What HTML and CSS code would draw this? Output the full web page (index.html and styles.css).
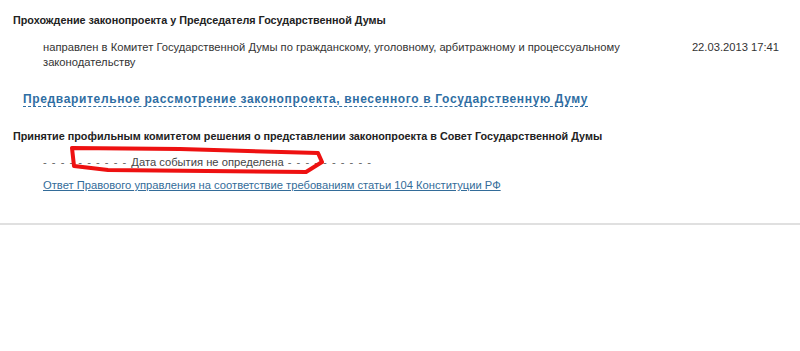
FILE: index.html
```html
<!DOCTYPE html>
<html lang="ru">
<head>
  <meta charset="UTF-8" />
  <title>Прохождение законопроекта</title>
  <link rel="stylesheet" href="styles.css">
</head>
<body>
  <div class="page">
    <div class="stage">
      <h3 class="stage-title">Прохождение законопроекта у Председателя Государственной Думы</h3>
      <div class="event">
        <div class="event-text">направлен в Комитет Государственной Думы по гражданскому, уголовному, арбитражному и процессуальному законодательству</div>
        <div class="event-date">22.03.2013 17:41</div>
      </div>
    </div>

    <h2 class="phase"><a href="#">Предварительное рассмотрение законопроекта, внесенного в Государственную Думу</a></h2>

    <div class="stage stage-next">
      <h3 class="stage-title">Принятие профильным комитетом решения о представлении законопроекта в Совет Государственной Думы</h3>
      <div class="no-date"><span class="dashes">- - - - - - - - - - </span>Дата события не определена<span class="dashes"> - - - - - - - - - -</span></div>
      <a class="doc-link" href="#">Ответ Правового управления на соответствие требованиям статьи 104 Конституции РФ</a>
    </div>

    <svg class="scribble" width="800" height="351" viewBox="0 0 800 351">
      <path d="M72 148 L180 149 L318 153 L322 162 L306 172 L108 170 L74 166 Z" fill="none" stroke="#ee1111" stroke-width="4" stroke-linejoin="round"/>
    </svg>
  </div>
</body>
</html>
```

FILE: styles.css
```css
body {
  margin: 0;
  background: #fff;
  font-family: 'Liberation Sans', Arial, sans-serif;
  font-size: 11.2px;
  color: #333;
}

.page {
  position: relative;
  height: 351px;
}

.page::after {
  content: '';
  display: block;
  margin-top: 32px;
  border-top: 2px solid #e0e0e0;
}

.stage {
  padding: 0 0 0 13px;
}

.stage-title {
  margin: 0;
  padding-top: 14px;
  font-size: 10.8px;
  font-weight: bold;
  color: #222;
}

.stage-next .stage-title {
  padding-top: 24px;
}

.event {
  display: flex;
  justify-content: space-between;
  padding: 14px 21px 0 30px;
  line-height: 15px;
}

.event-text {
  width: 590px;
}

.event-date {
  white-space: nowrap;
}

.phase {
  margin: 22px 0 0 23px;
  font-size: 12px;
  letter-spacing: 0.65px;
}

.phase a {
  color: #2f6ea3;
  text-decoration: none;
  border-bottom: 1px dashed #2f6ea3;
}

.no-date {
  padding: 14px 0 0 30px;
  color: #444;
}

.dashes {
  letter-spacing: 1px;
  color: #666;
}

.doc-link {
  display: inline-block;
  margin: 11px 0 0 30px;
  color: #336c99;
}

.scribble {
  position: absolute;
  left: 0;
  top: 0;
  pointer-events: none;
}
```
